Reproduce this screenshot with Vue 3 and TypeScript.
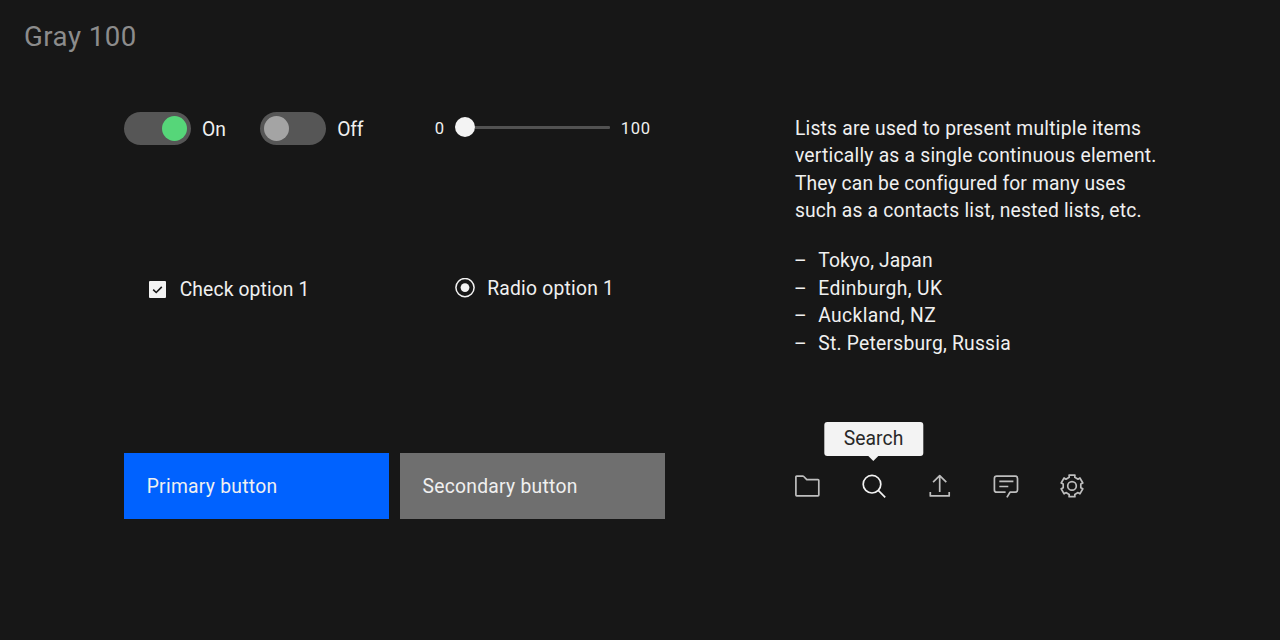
<script setup lang="ts">
import { ref } from 'vue'

interface Line { text: string; fit: string }

const firstOn = ref(true)
const secondOn = ref(false)

const paragraph: Line[] = [
  { text: 'Lists are used to present multiple items', fit: 'fit-c' },
  { text: 'vertically as a single continuous element.', fit: 'fit-c' },
  { text: 'They can be configured for many uses', fit: 'fit-a' },
  { text: 'such as a contacts list, nested lists, etc.', fit: 'fit-b' },
]

const cities: Line[] = [
  { text: 'Tokyo, Japan', fit: 'fit-a' },
  { text: 'Edinburgh, UK', fit: 'fit-d' },
  { text: 'Auckland, NZ', fit: 'fit-d' },
  { text: 'St. Petersburg, Russia', fit: 'fit-c' },
]

// Outline of the six-toothed gear, centred on (cx, cy).
function gearPath(cx: number, cy: number, outer: number, root: number): string {
  const points: string[] = []
  for (let i = 0; i < 6; i++) {
    const mid = -90 + i * 60
    const corners: [number, number][] = [[-18, root], [-15, outer], [15, outer], [18, root]]
    for (const [offset, radius] of corners) {
      const a = ((mid + offset) * Math.PI) / 180
      points.push(`${(cx + radius * Math.cos(a)).toFixed(2)} ${(cy + radius * Math.sin(a)).toFixed(2)}`)
    }
  }
  return `M${points.join('L')}Z`
}

const gear = gearPath(14, 13.9, 11.2, 9)
</script>

<template>
  <main class="theme">
    <h1 class="title">Gray 100</h1>
    <div class="content">
      <section class="controls">
        <div class="row row-switches">
          <div class="switches">
            <button class="switch" :class="{ on: firstOn }" @click="firstOn = !firstOn"><span class="knob"></span></button>
            <span class="label on-label">On</span>
            <button class="switch" :class="{ on: secondOn }" @click="secondOn = !secondOn"><span class="knob"></span></button>
            <span class="label off-label">Off</span>
          </div>
          <div class="slider">
            <span class="bound">0</span>
            <div class="rail"><span class="handle"></span><span class="track"></span></div>
            <span class="bound max">100</span>
          </div>
        </div>

        <div class="row row-options">
          <label class="option check">
            <svg class="box" width="17" height="17" viewBox="0 0 17 17">
              <rect width="17" height="17" rx="1" fill="#f3f3f3" />
              <path d="M4.2 8.7L7.2 11.5L12.8 5.9" fill="none" stroke="#171717" stroke-width="1.6" />
            </svg>
            <span class="label fit-a">Check option 1</span>
          </label>
          <label class="option radio">
            <svg width="20" height="20" viewBox="0 0 20 20">
              <circle cx="10" cy="9.6" r="9.1" fill="none" stroke="#f3f3f3" stroke-width="1.5" />
              <circle cx="10" cy="9.6" r="4.4" fill="#f3f3f3" />
            </svg>
            <span class="label fit-c">Radio option 1</span>
          </label>
        </div>

        <div class="row row-buttons">
          <button class="btn primary">Primary button</button>
          <button class="btn secondary">Secondary button</button>
        </div>
      </section>

      <section class="copy">
        <p class="text">
          <span v-for="line in paragraph" :key="line.text" class="line" :class="line.fit">{{ line.text }}</span>
        </p>
        <ul class="list">
          <li v-for="city in cities" :key="city.text"><span class="dash">–</span><span :class="city.fit">{{ city.text }}</span></li>
        </ul>
        <nav class="icons">
          <svg class="icon" viewBox="0 0 28 28">
            <path d="M3.6 4.1H9.8Q10.3 4.1 10.7 4.5L13.8 7.7H25Q25.8 7.7 25.8 8.5V23.1Q25.8 23.9 25 23.9H3.7Q2.9 23.9 2.9 23.1V4.8Q2.9 4.1 3.6 4.1Z" />
          </svg>
          <span class="target">
            <svg class="icon active" viewBox="0 0 28 28">
              <circle cx="12" cy="12.2" r="8.8" />
              <path d="M18.3 18.4L25.2 25.3" />
            </svg>
            <span class="tooltip">Search</span>
          </span>
          <svg class="icon" viewBox="0 0 28 28">
            <path d="M13.7 20V4M7.1 10.2L13.7 3.7L20.3 10.2M4.3 20V23.9H23.2V20" />
          </svg>
          <svg class="icon" viewBox="0 0 28 28">
            <path d="M13.6 20.2H4.7Q2.4 20.2 2.4 17.9V6.4Q2.4 4.1 4.7 4.1H23.2Q25.5 4.1 25.5 6.4V17.9Q25.5 20.2 23.2 20.2H18L14.9 25.4M7.3 9.4H21.4M7.3 14.5H16.3" />
          </svg>
          <svg class="icon" viewBox="0 0 28 28">
            <path :d="gear" />
            <circle cx="14" cy="13.9" r="4.3" />
          </svg>
        </nav>
      </section>
    </div>
  </main>
</template>

<style>
body { background: #171717; }
</style>

<style scoped>
.theme {
  box-sizing: border-box;
  width: 1280px;
  height: 640px;
  padding: 18.5px 24px 0;
  overflow: hidden;
  background: #171717;
  color: #f0f0f0;
  font-family: Roboto, "Open Sans", sans-serif;
  font-size: 19.3px;
  line-height: 27.6px;
}
button { font: inherit; color: inherit; border: 0; padding: 0; cursor: pointer; }
.title {
  margin: 0;
  height: 93.5px;
  font-size: 27.6px;
  font-weight: 400;
  line-height: 36px;
  letter-spacing: 0.5px;
  color: #8c8c8c;
}
.content {
  display: grid;
  grid-template-columns: 540.7px 1fr;
  column-gap: 129.8px;
  padding-left: 100.4px;
}
.fit-a { letter-spacing: 0.12px; }
.fit-b { letter-spacing: 0.175px; }
.fit-c { letter-spacing: 0.225px; }
.fit-d { letter-spacing: 0.36px; }

.row { display: flex; }
.row-switches { height: 33px; }
.switches { display: flex; align-items: center; width: 310.3px; }
.switch {
  display: flex;
  align-items: center;
  box-sizing: border-box;
  width: 66.3px;
  height: 33px;
  padding: 0 3.6px 0 4px;
  border-radius: 17px;
  background: #565656;
}
.switch.on { justify-content: flex-end; }
.knob { width: 25.2px; height: 25.2px; border-radius: 50%; background: #a4a4a4; }
.on .knob { background: #56d679; }
.switches .label { margin-left: 11.2px; padding-top: 2.4px; }
.on-label { width: 57.8px; }
.off-label { letter-spacing: -0.2px; }

.slider { display: flex; align-items: center; font-size: 16.6px; }
.rail { display: flex; align-items: center; width: 155px; margin: -3px 10.5px 0 11.3px; }
.handle { width: 20px; height: 20px; border-radius: 50%; background: #f3f3f3; }
.track { flex: 1; height: 3px; border-radius: 0 1px 1px 0; background: #525252; }
.max { letter-spacing: 0.6px; }

.row-options { margin-top: 128.2px; height: 33px; }
.option { display: flex; align-items: center; height: 33px; }
.check { width: 330.8px; box-sizing: border-box; padding-left: 25px; margin-right: -25px; gap: 13.3px; }
.box { margin-top: -0.4px; }
.radio { height: 29px; gap: 12.2px; margin-left: 24.8px; }
.radio .label { padding-top: 2.4px; }

.row-buttons { margin-top: 146.8px; gap: 10.8px; }
.btn { width: 265px; height: 66px; padding: 1.6px 0 0 22.3px; text-align: left; letter-spacing: 0.27px; }
.primary { background: #0062ff; }
.secondary { background: #6f6f6f; }

.text { margin: 2.7px 0 22.1px; }
.line { display: block; white-space: nowrap; }
.list { list-style: none; margin: 0; padding: 0; }
.list li { display: flex; height: 27.6px; }
.dash { width: 24.2px; margin-left: -0.8px; padding-top: 1px; }

.icons { display: flex; gap: 38.2px; margin: 114.2px 0 0 -1.5px; }
.icon {
  display: block;
  width: 28px;
  height: 28px;
  fill: none;
  stroke: #bebebe;
  stroke-width: 1.7;
  stroke-linejoin: round;
}
.icon.active { stroke: #f3f3f3; }
.target { position: relative; }
.tooltip {
  position: absolute;
  left: 50%;
  bottom: 43.9px;
  transform: translateX(-50%);
  width: 99.4px;
  height: 33.4px;
  border-radius: 3px;
  background: #f3f3f3;
  color: #282828;
  line-height: 33.6px;
  letter-spacing: 0.1px;
  text-align: center;
}
.tooltip::after {
  content: "";
  position: absolute;
  top: 100%;
  left: 50%;
  margin-left: -5px;
  border: 5px solid transparent;
  border-top-color: #f3f3f3;
  border-bottom: 0;
}
</style>
